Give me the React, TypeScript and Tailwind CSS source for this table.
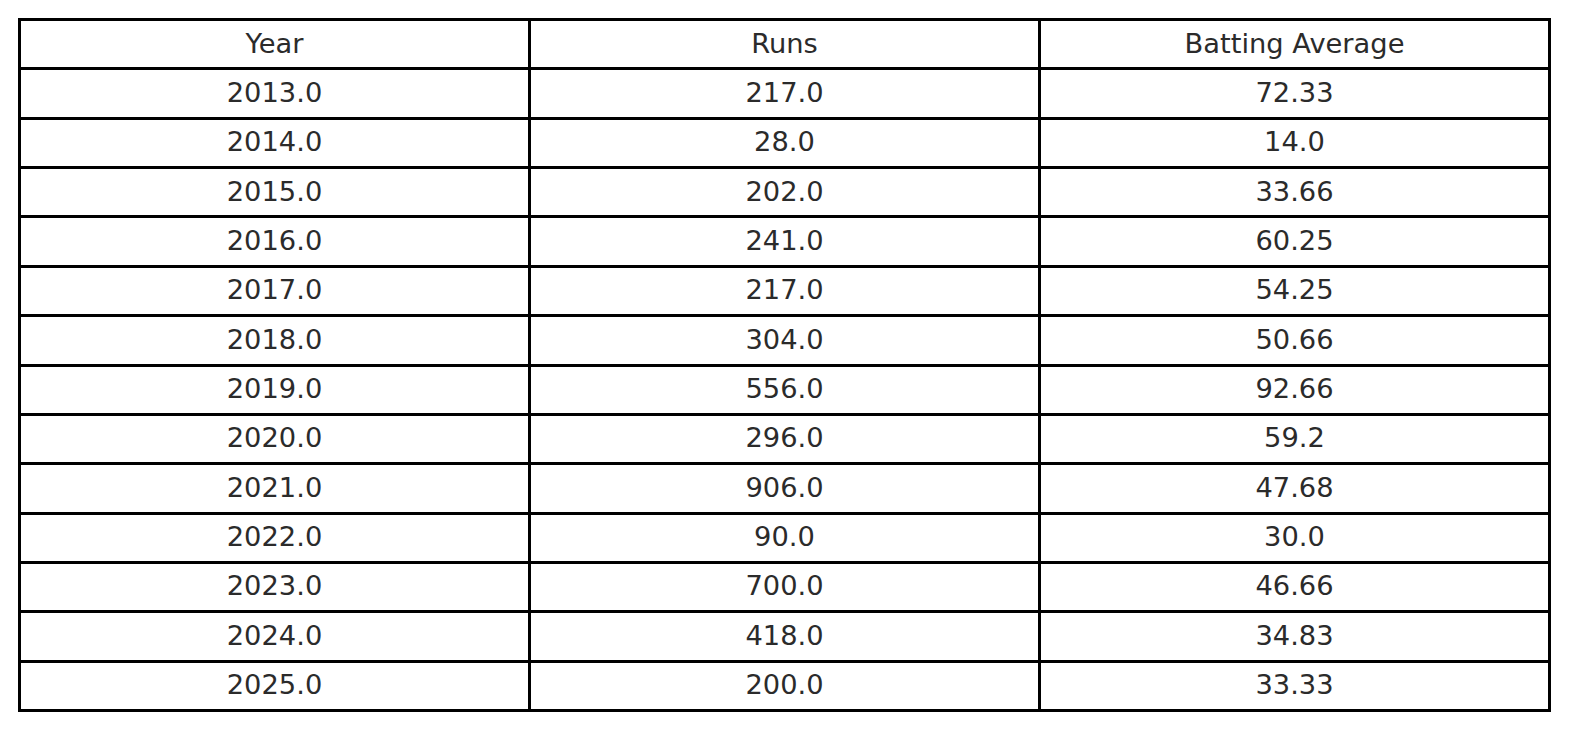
const header = ['Year', 'Runs', 'Batting Average'];

const rows: [string, string, string][] = [
  ['2013.0', '217.0', '72.33'],
  ['2014.0', '28.0', '14.0'],
  ['2015.0', '202.0', '33.66'],
  ['2016.0', '241.0', '60.25'],
  ['2017.0', '217.0', '54.25'],
  ['2018.0', '304.0', '50.66'],
  ['2019.0', '556.0', '92.66'],
  ['2020.0', '296.0', '59.2'],
  ['2021.0', '906.0', '47.68'],
  ['2022.0', '90.0', '30.0'],
  ['2023.0', '700.0', '46.66'],
  ['2024.0', '418.0', '34.83'],
  ['2025.0', '200.0', '33.33'],
];

export default function App() {
  const cells = [header, ...rows].flat();

  return (
    <div className="w-[1589px] h-[740px] bg-white pt-[18px] pl-[18px]" style={{ fontFamily: '"DejaVu Sans", sans-serif' }}>
      {/* table grid: black background shows through gaps as the cell borders */}
      <div className="w-[1533px] h-[694px] bg-black p-[3px] grid grid-cols-3 grid-rows-[repeat(14,1fr)] gap-[3px]">
        {cells.map((c, i) => (
          <div key={i} className="bg-white flex items-center justify-center text-[27.3px] text-[#2b2b2b] leading-none pb-[2px]">
            {c}
          </div>
        ))}
      </div>
    </div>
  );
}
